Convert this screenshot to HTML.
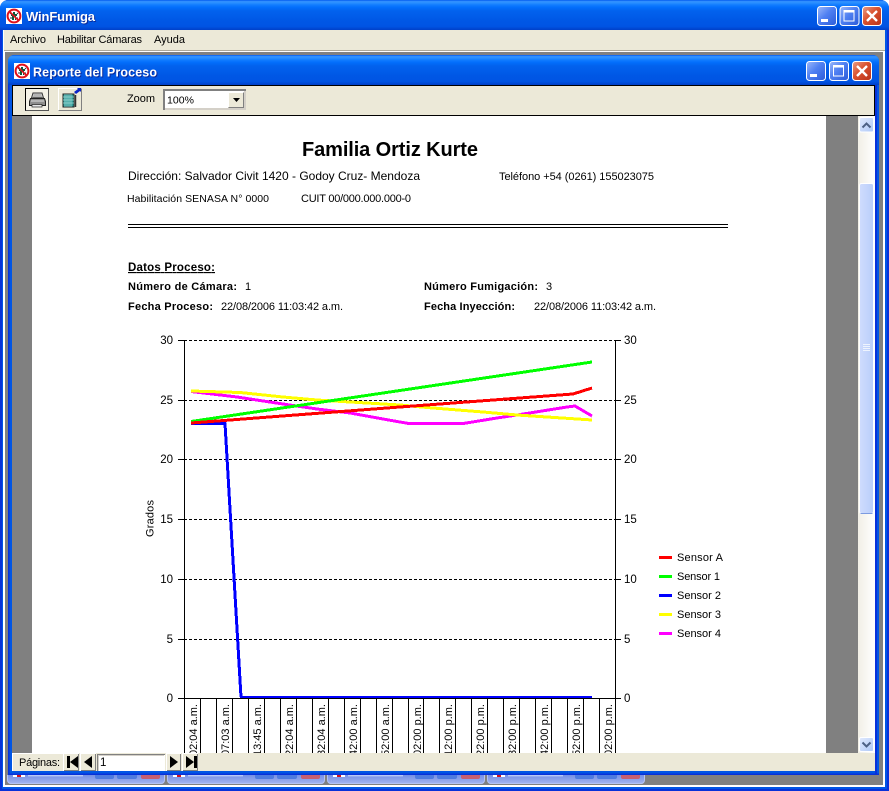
<!DOCTYPE html>
<html><head><meta charset="utf-8"><title>WinFumiga</title>
<style>
html,body{margin:0;padding:0;background:#fff;width:889px;height:791px;overflow:hidden}
svg{display:block;font-family:"Liberation Sans",Arial,sans-serif}
.t{font-weight:bold;fill:#fff;filter:drop-shadow(1px 1px 0 #0a2a9a)}
.u{font-size:11px;fill:#000}
.r{font-size:11px;fill:#000}
.b{font-size:11px;font-weight:bold;fill:#000}
.ax{font-size:11.5px;fill:#000}
.p{fill:none;stroke-width:3;shape-rendering:crispEdges;stroke-linejoin:round}
.c{shape-rendering:crispEdges}
</style></head><body>
<svg width="889" height="791" viewBox="0 0 889 791" xmlns="http://www.w3.org/2000/svg">
<defs>
<linearGradient id="tb" x1="0" y1="0" x2="0" y2="1">
<stop offset="0" stop-color="#0058EE"/><stop offset=".05" stop-color="#3593FF"/><stop offset=".1" stop-color="#288EFF"/><stop offset=".16" stop-color="#127DFF"/><stop offset=".24" stop-color="#036FFC"/><stop offset=".36" stop-color="#0262EE"/><stop offset=".7" stop-color="#0057E5"/><stop offset=".88" stop-color="#0054E3"/><stop offset="1" stop-color="#0040C8"/>
</linearGradient>
<linearGradient id="bl" x1="0" y1="0" x2="1" y2="1"><stop offset="0" stop-color="#9DB9FA"/><stop offset=".45" stop-color="#4F80F2"/><stop offset="1" stop-color="#2C5BD8"/></linearGradient>
<linearGradient id="rd" x1="0" y1="0" x2="1" y2="1"><stop offset="0" stop-color="#E8A08A"/><stop offset=".45" stop-color="#D9512E"/><stop offset="1" stop-color="#B8321A"/></linearGradient>
<linearGradient id="sb" x1="0" y1="0" x2="1" y2="0"><stop offset="0" stop-color="#F1EFE6"/><stop offset="1" stop-color="#FFFFFF"/></linearGradient>
<linearGradient id="th" x1="0" y1="0" x2="1" y2="0"><stop offset="0" stop-color="#CFDCFD"/><stop offset=".5" stop-color="#C4D5FC"/><stop offset="1" stop-color="#B9CDF9"/></linearGradient>
<linearGradient id="sbtn" x1="0" y1="0" x2="1" y2="1"><stop offset="0" stop-color="#E1EAFE"/><stop offset="1" stop-color="#AEC8F7"/></linearGradient>
<linearGradient id="mini" x1="0" y1="0" x2="0" y2="1"><stop offset="0" stop-color="#7690E4"/><stop offset="1" stop-color="#A3B5F0"/></linearGradient>
<g id="ico">
<rect width="16" height="16" fill="#fff"/>
<path d="M7 4h2v2h2v2h-1v4H9V9H8v3H6V8H5V6h2z" fill="#0c5a3a"/>
<path d="M4 5l1 1M12 5l-1 1M4 10h2M10 10h2" stroke="#234" stroke-width="1" fill="none"/>
<circle cx="8" cy="8" r="6.4" fill="none" stroke="#E0101A" stroke-width="2"/>
<path d="M3.6 3.6L12.4 12.4" stroke="#E0101A" stroke-width="1.6"/>
</g>
<g id="bmin"><rect x=".5" y=".5" width="19" height="19" rx="3" fill="url(#bl)" stroke="#fff"/><rect x="4" y="13" width="7" height="3" fill="#fff"/></g>
<g id="bmax"><rect x=".5" y=".5" width="19" height="19" rx="3" fill="url(#bl)" stroke="#fff"/><rect x="4.5" y="5" width="10" height="10" fill="none" stroke="#fff"/><rect x="4" y="4" width="11" height="2.5" fill="#fff"/></g>
<g id="bclo"><rect x=".5" y=".5" width="19" height="19" rx="3" fill="url(#rd)" stroke="#fff"/><path d="M5 5L15 15M15 5L5 15" stroke="#fff" stroke-width="2.4"/></g>
<g id="mw">
<path d="M0 0H158V5a4 4 0 0 1-4 4H4a4 4 0 0 1-4-4z" fill="url(#mini)"/>
<path d="M0.5 0V5a3.500 3.500 0 0 0 3.500 3.500H154a3.500 3.500 0 0 0 3.500-3.500V0" fill="none" stroke="#B5C3F3"/>
<rect x="6" y="0" width="12" height="2" fill="#fff"/><rect x="10" y="0" width="4" height="2" fill="#D01020"/>
<rect x="21" y="0" width="55" height="1.400" fill="#B9C8F5"/>
<path d="M88 0h19v2a2 2 0 0 1-2 2H90a2 2 0 0 1-2-2zM110 0h20v2a2 2 0 0 1-2 2H112a2 2 0 0 1-2-2z" fill="#4F7BDF"/>
<path d="M134 0h19v2a2 2 0 0 1-2 2H136a2 2 0 0 1-2-2z" fill="#C55F72"/>
</g>
</defs>

<!-- outer window -->
<rect width="889" height="791" fill="#fff"/>
<path d="M0 8a8 8 0 0 1 8-8H881a8 8 0 0 1 8 8V791H0z" fill="#0055E5"/>
<path d="M0 8a8 8 0 0 1 8-8H881a8 8 0 0 1 8 8V30H0z" fill="url(#tb)"/>
<rect x="0" y="30" width="2" height="761" fill="#0831D9"/>
<rect x="887" y="30" width="2" height="761" fill="#0831D9"/>
<rect x="0" y="789" width="889" height="2" fill="#0831D9"/>
<rect x="3" y="30" width="882" height="757" fill="#fff" class="c"/>
<rect x="5" y="30" width="878" height="755" fill="#808080" class="c"/>
<rect x="4" y="30" width="881" height="20" fill="#ECE9D8" class="c"/>
<rect x="4" y="50" width="881" height="1" fill="#ACA899" class="c"/>
<rect x="4" y="51" width="881" height="1" fill="#fff" class="c"/>
<use href="#ico" x="6" y="8"/>
<text class="t" x="26" y="21" font-size="13" textLength="69" lengthAdjust="spacing">WinFumiga</text>
<use href="#bmin" x="817" y="6"/><use href="#bmax" x="839.500" y="6"/><use href="#bclo" x="862" y="6"/>
<text class="u" x="10" y="43" textLength="36" lengthAdjust="spacing">Archivo</text>
<text class="u" x="57" y="43" textLength="85" lengthAdjust="spacing">Habilitar Cámaras</text>
<text class="u" x="154" y="43" textLength="31" lengthAdjust="spacing">Ayuda</text>

<!-- minimized windows -->
<use href="#mw" x="7" y="775"/>
<use href="#mw" x="167" y="775"/>
<use href="#mw" x="327" y="775"/>
<use href="#mw" x="487" y="775"/>

<!-- inner window -->
<path d="M8 61a6 6 0 0 1 6-6H873a6 6 0 0 1 6 6V775H8z" fill="#0055E5"/>
<path d="M8 61a6 6 0 0 1 6-6H873a6 6 0 0 1 6 6V85H8z" fill="url(#tb)"/>
<rect x="8" y="85" width="1.500" height="690" fill="#0831D9"/>
<rect x="875" y="85" width="2" height="690" fill="#0831D9"/>
<rect x="8" y="773.500" width="871" height="1.500" fill="#0831D9"/>
<use href="#ico" x="14" y="63"/>
<text class="t" x="33" y="76.500" font-size="12.500" textLength="124" lengthAdjust="spacing">Reporte del Proceso</text>
<use href="#bmin" x="806" y="61"/><use href="#bmax" x="829" y="61"/><use href="#bclo" x="852" y="61"/>

<!-- toolbar -->
<rect x="12.500" y="85.500" width="862" height="30" fill="#ECE9D8" stroke="#000" class="c"/>
<rect x="25" y="88" width="24" height="23" fill="#F4F2E8" class="c"/>
<path d="M25.500 111V88.500H49" fill="none" stroke="#000" class="c"/>
<path d="M48.500 88.500V110.500H25.500" fill="none" stroke="#555" class="c"/>
<g>
<path d="M33 93h9l1.500 5H31.500z" fill="#D8D8D8" stroke="#333"/>
<path d="M33.500 95h8M33 97h9" stroke="#777" stroke-width=".8"/>
<path d="M30.500 98.500h14l1 3v4h-16v-4z" fill="#8E8E8E" stroke="#222"/>
<rect x="32" y="104.500" width="10" height="2.500" fill="#E8E8E8" stroke="#222" stroke-width=".7"/>
<path d="M31 101h13" stroke="#DDD"/>
</g>
<rect x="58" y="88" width="24" height="23" fill="#ECE9D8" class="c"/>
<path d="M58.500 111V88.500H82" fill="none" stroke="#fff" class="c"/>
<path d="M81.500 88.500V110.500H58.500" fill="none" stroke="#808080" class="c"/>
<rect x="63" y="94" width="11" height="13" fill="#2E9A96" stroke="#222"/>
<path d="M65 94v13M67 94v13M69 94v13M71 94v13M63 97h11M63 100h11M63 103h11" stroke="#9FD9D4" stroke-width=".7"/>
<path d="M75.500 95v12" stroke="#333" stroke-width="1.500"/>
<path d="M74 92l4-3-1-1h4v4l-1-1-4 3z" fill="#0A24C8"/>
<text class="u" x="127" y="102" textLength="28" lengthAdjust="spacing">Zoom</text>
<rect x="163" y="89" width="83" height="21" fill="#D4D0C8" class="c"/>
<path d="M163 89h2v21h-2zM163 89h83v2h-83z" fill="#808080" class="c"/>
<rect x="165" y="91" width="79" height="17" fill="#fff" class="c"/>
<rect x="228" y="92" width="16" height="16" fill="#ECE9D8" class="c"/>
<path d="M228.500 107V92.500H244" fill="none" stroke="#fff" class="c"/>
<path d="M243.500 92.500V107.500H228.500" fill="none" stroke="#808080" class="c"/>
<path d="M233 98h7l-3.500 4z" fill="#000"/>
<text x="167" y="103.500" font-size="10.500" textLength="27" lengthAdjust="spacing">100%</text>

<!-- content -->
<rect x="12" y="116" width="846" height="637" fill="#808080" class="c"/>
<rect x="32" y="116" width="794" height="637" fill="#fff" class="c"/>
<rect x="858" y="116" width="17" height="637" fill="url(#sb)" class="c"/>

<!-- scrollbar -->
<rect x="859.500" y="117.500" width="14" height="14.500" rx="1.500" fill="url(#sbtn)" stroke="#fff"/>
<path d="M862.500 127.500l4-4 4 4" fill="none" stroke="#4D6185" stroke-width="2"/>
<rect x="859.500" y="183.500" width="14" height="330" rx="2" fill="url(#th)" stroke="#fff"/>
<path d="M860.500 513.500h12" stroke="#7C9BE0"/>
<path d="M863 344.500h7M863 346.500h7M863 348.500h7M863 350.500h7" stroke="#EEF4FE"/>
<rect x="859.500" y="737.500" width="14" height="14" rx="1.500" fill="url(#sbtn)" stroke="#fff"/>
<path d="M862.500 742.500l4 4 4-4" fill="none" stroke="#4D6185" stroke-width="2"/>

<!-- report header -->
<text x="302" y="156" font-size="20" font-weight="bold" textLength="176" lengthAdjust="spacing">Familia Ortiz Kurte</text>
<text x="128" y="180" font-size="12" textLength="292" lengthAdjust="spacing">Dirección: Salvador Civit 1420 - Godoy Cruz- Mendoza</text>
<text x="499" y="180" class="r" textLength="155" lengthAdjust="spacing">Teléfono +54 (0261) 155023075</text>
<text x="127" y="202" font-size="10.500" textLength="142" lengthAdjust="spacing">Habilitación SENASA N° 0000</text>
<text x="301" y="202" class="r" textLength="110" lengthAdjust="spacing">CUIT 00/000.000.000-0</text>
<path d="M128 224.500H728M128 227.500H728" stroke="#000" class="c"/>
<text x="128" y="271" font-size="11.500" font-weight="bold" text-decoration="underline" textLength="87" lengthAdjust="spacing">Datos Proceso:</text>
<text x="128" y="290" class="b" textLength="109" lengthAdjust="spacing">Número de Cámara:</text>
<text x="245" y="290" class="r">1</text>
<text x="128" y="310" class="b" textLength="85" lengthAdjust="spacing">Fecha Proceso:</text>
<text x="221" y="310" class="r" textLength="122" lengthAdjust="spacing">22/08/2006 11:03:42 a.m.</text>
<text x="424" y="290" class="b" textLength="114" lengthAdjust="spacing">Número Fumigación:</text>
<text x="546" y="290" class="r">3</text>
<text x="424" y="310" class="b" textLength="91" lengthAdjust="spacing">Fecha Inyección:</text>
<text x="534" y="310" class="r" textLength="122" lengthAdjust="spacing">22/08/2006 11:03:42 a.m.</text>

<!-- chart -->
<path d="M184 340.500H615M184 400.500H615M184 459.500H615M184 519.500H615M184 579.500H615M184 639.500H615" stroke="#000" stroke-dasharray="3 2" class="c"/>
<path d="M184.500 340V698M615.500 340V698M178 340.500H184M178 400.500H184M178 459.500H184M178 519.500H184M178 579.500H184M178 639.500H184M178 698.500H184M615 340.500H621M615 400.500H621M615 459.500H621M615 519.500H621M615 579.500H621M615 639.500H621M615 698.500H621" stroke="#000" fill="none" class="c"/>
<path d="M184.500 698V753M200.500 698V753M216.500 698V753M232.500 698V753M248.500 698V753M264.500 698V753M280.500 698V753M296.500 698V753M312.500 698V753M328.500 698V753M344.500 698V753M360.500 698V753M376.500 698V753M392.500 698V753M408.500 698V753M423.500 698V753M439.500 698V753M455.500 698V753M471.500 698V753M487.500 698V753M503.500 698V753M519.500 698V753M535.500 698V753M551.500 698V753M567.500 698V753M583.500 698V753M599.500 698V753M615.500 698V753" stroke="#000" class="c"/>
<g class="ax" text-anchor="end">
<text x="173" y="344">30</text><text x="173" y="404">25</text><text x="173" y="463">20</text><text x="173" y="523">15</text><text x="173" y="583">10</text><text x="173" y="643">5</text><text x="173" y="702">0</text>
</g>
<g class="ax">
<text x="624" y="344">30</text><text x="624" y="404">25</text><text x="624" y="463">20</text><text x="624" y="523">15</text><text x="624" y="583">10</text><text x="624" y="643">5</text><text x="624" y="702">0</text>
</g>
<text transform="translate(153.500,537) rotate(-90)" class="r" textLength="37" lengthAdjust="spacing">Grados</text>

<polyline class="p" stroke="#FF00FF" points="191,391.500 237,397 250,399 283,404 317,409 350,413 383,419 400,422 410,423.700 462,423.700 497,418 517,415 567,407 575,406 592,416"/>
<polyline class="p" stroke="#FFFF00" points="191,391 240,392.500 283,397 317,400 400,405 433,408 483,412 517,415 592,420"/>
<polyline class="p" stroke="#0000FF" points="191,423.500 225,423.500 241,697"/>
<path d="M240 697H592" stroke="#0000FF" stroke-width="2" class="c"/>
<polyline class="p" stroke="#00FF00" points="191,421.500 592,362"/>
<polyline class="p" stroke="#FF0000" points="191,423 400,407 573,394 592,388"/>
<path d="M184 698.500H616" stroke="#000" class="c"/>

<g class="r" text-anchor="end">
<text transform="translate(197,704) rotate(-90)" textLength="52" lengthAdjust="spacing">02:04 a.m.</text>
<text transform="translate(229,704) rotate(-90)" textLength="52" lengthAdjust="spacing">07:03 a.m.</text>
<text transform="translate(261,704) rotate(-90)" textLength="52" lengthAdjust="spacing">13:45 a.m.</text>
<text transform="translate(293,704) rotate(-90)" textLength="52" lengthAdjust="spacing">22:04 a.m.</text>
<text transform="translate(325,704) rotate(-90)" textLength="52" lengthAdjust="spacing">32:04 a.m.</text>
<text transform="translate(357,704) rotate(-90)" textLength="52" lengthAdjust="spacing">42:00 a.m.</text>
<text transform="translate(389,704) rotate(-90)" textLength="52" lengthAdjust="spacing">52:00 a.m.</text>
<text transform="translate(421,704) rotate(-90)" textLength="52" lengthAdjust="spacing">02:00 p.m.</text>
<text transform="translate(452,704) rotate(-90)" textLength="52" lengthAdjust="spacing">12:00 p.m.</text>
<text transform="translate(484,704) rotate(-90)" textLength="52" lengthAdjust="spacing">22:00 p.m.</text>
<text transform="translate(516,704) rotate(-90)" textLength="52" lengthAdjust="spacing">32:00 p.m.</text>
<text transform="translate(548,704) rotate(-90)" textLength="52" lengthAdjust="spacing">42:00 p.m.</text>
<text transform="translate(580,704) rotate(-90)" textLength="52" lengthAdjust="spacing">52:00 p.m.</text>
<text transform="translate(612,704) rotate(-90)" textLength="52" lengthAdjust="spacing">02:00 p.m.</text>
</g>

<!-- legend -->
<rect x="659" y="556" width="13" height="3" fill="#FF0000" class="c"/>
<rect x="659" y="575" width="13" height="3" fill="#00FF00" class="c"/>
<rect x="659" y="594" width="13" height="3" fill="#0000FF" class="c"/>
<rect x="659" y="613" width="13" height="3" fill="#FFFF00" class="c"/>
<rect x="659" y="632" width="13" height="3" fill="#FF00FF" class="c"/>
<g class="r">
<text x="677" y="561" textLength="46" lengthAdjust="spacing">Sensor A</text>
<text x="677" y="580" textLength="43" lengthAdjust="spacing">Sensor 1</text>
<text x="677" y="599" textLength="44" lengthAdjust="spacing">Sensor 2</text>
<text x="677" y="618" textLength="44" lengthAdjust="spacing">Sensor 3</text>
<text x="677" y="637" textLength="44" lengthAdjust="spacing">Sensor 4</text>
</g>

<!-- status bar -->
<rect x="12" y="753" width="863" height="18" fill="#ECE9D8" class="c"/>
<path d="M12.500 771V753.500H63" stroke="#fff" fill="none" class="c"/>
<text class="u" x="19" y="766" textLength="41" lengthAdjust="spacing">Páginas:</text>
<g class="c">
<rect x="63" y="753" width="16" height="18" fill="#ECE9D8"/><path d="M63.500 771V753.500H79" stroke="#fff" fill="none"/><path d="M78.500 754V770.500H64" stroke="#808080" fill="none"/>
<rect x="80" y="753" width="16" height="18" fill="#ECE9D8"/><path d="M80.500 771V753.500H96" stroke="#fff" fill="none"/><path d="M95.500 754V770.500H81" stroke="#808080" fill="none"/>
<rect x="166" y="753" width="15" height="18" fill="#ECE9D8"/><path d="M166.500 771V753.500H181" stroke="#fff" fill="none"/><path d="M180.500 754V770.500H167" stroke="#808080" fill="none"/>
<rect x="182" y="753" width="16" height="18" fill="#ECE9D8"/><path d="M182.500 771V753.500H198" stroke="#fff" fill="none"/><path d="M197.500 754V770.500H183" stroke="#808080" fill="none"/>
<rect x="97" y="754" width="68" height="17" fill="#fff"/>
<path d="M97 754h68v1H98v16h-1z" fill="#808080"/>
<path d="M98 755h66v1H99v15h-1z" fill="#D4D0C8"/>
</g>
<path d="M67 756h3v12h-3zM78 756v12l-8-6z" fill="#000"/>
<path d="M92 756v12l-8-6z" fill="#000"/>
<path d="M170 756v12l8-6z" fill="#000"/>
<path d="M186 756v12l8-6zM194 756h3v12h-3z" fill="#000"/>
<text x="100" y="766" font-size="11.500">1</text>
</svg>
</body></html>
